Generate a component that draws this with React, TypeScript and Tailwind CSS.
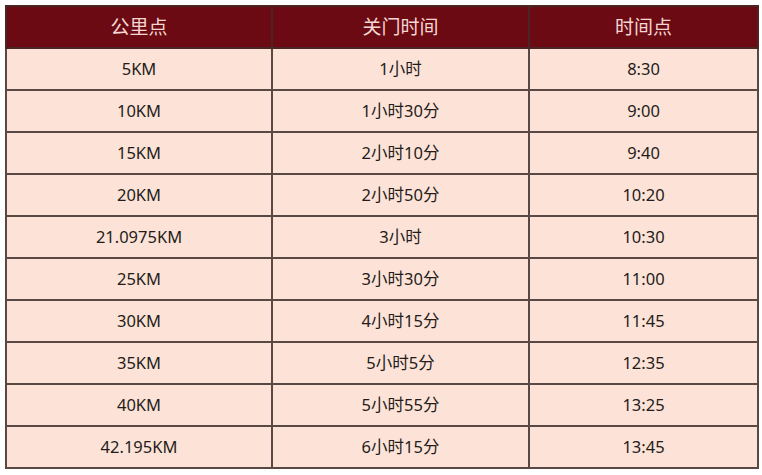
const ROWS = [
  ["5KM", "1小时", "8:30"],
  ["10KM", "1小时30分", "9:00"],
  ["15KM", "2小时10分", "9:40"],
  ["20KM", "2小时50分", "10:20"],
  ["21.0975KM", "3小时", "10:30"],
  ["25KM", "3小时30分", "11:00"],
  ["30KM", "4小时15分", "11:45"],
  ["35KM", "5小时5分", "12:35"],
  ["40KM", "5小时55分", "13:25"],
  ["42.195KM", "6小时15分", "13:45"],
];

export default function App() {
  return (
    <div
      className="w-[762px] h-[475px] bg-white pt-[5px] pl-[5px]"
      style={{ fontFamily: '"Noto Sans", "Noto Sans CJK SC", sans-serif' }}
    >
      <table className="w-[752px] border-collapse table-fixed">
        <colgroup>
          <col className="w-[266px]" />
          <col className="w-[257px]" />
          <col className="w-[229px]" />
        </colgroup>
        <thead>
          <tr className="h-[42px] bg-[#6b0a12]">
            {["公里点", "关门时间", "时间点"].map((h) => (
              <th
                key={h}
                className="border-2 border-[#4a2524] text-[19px] font-normal text-[#f4d6d4] text-center"
              >
                {h}
              </th>
            ))}
          </tr>
        </thead>
        <tbody>
          {ROWS.map((r) => (
            <tr key={r[0]} className="h-[42px] bg-[#fde3d7]">
              {r.map((c, i) => (
                <td
                  key={i}
                  className="border-2 border-[#594843] text-[16.5px] text-[#241c1a] text-center"
                >
                  {c}
                </td>
              ))}
            </tr>
          ))}
        </tbody>
      </table>
    </div>
  );
}
